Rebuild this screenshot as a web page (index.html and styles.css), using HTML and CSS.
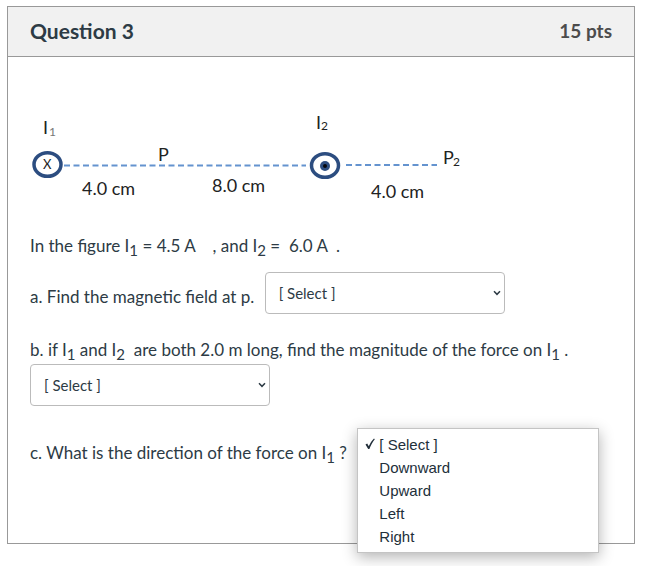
FILE: index.html
```html
<!DOCTYPE html>
<html lang="en">
<head>
<meta charset="utf-8">
<title>Question 3</title>
<link rel="stylesheet" href="styles.css">
</head>
<body>
<main class="question">
  <header class="question-header">
    <h1 class="question-name">Question 3</h1>
    <span class="question-points">15 pts</span>
  </header>
  <div class="question-body">
    <svg class="figure" width="450" height="100" viewBox="0 0 450 100" role="img" aria-label="Two parallel currents and points P and P2">
      <g class="wire">
        <path d="M34 59.500H276" />
        <path d="M316 59H407" />
      </g>
      <g class="ring">
        <ellipse cx="17.500" cy="58.500" rx="13.500" ry="11.800" />
        <ellipse cx="295" cy="59.500" rx="13.500" ry="11.800" />
      </g>
      <circle class="dot" cx="295" cy="60" r="5" />
      <circle class="dot-core" cx="295" cy="60" r="2" />
      <g class="figure-text">
        <text x="13" y="28">I</text><text class="small faint" x="19" y="30">1</text>
        <text x="286" y="23">I</text><text class="small" x="291" y="24">2</text>
        <text class="cross" x="13" y="63">X</text>
        <text x="128" y="55">P</text>
        <text x="413" y="58">P</text><text class="small" x="423" y="60">2</text>
        <text x="52" y="89">4.0 cm</text>
        <text x="182" y="86">8.0 cm</text>
        <text x="341" y="92">4.0 cm</text>
      </g>
    </svg>
    <p>In the figure I<sub>1</sub> = 4.5 A &nbsp;&nbsp; , and I<sub>2</sub> =&nbsp; 6.0 A&nbsp; .</p>
    <p class="answer"><label for="field">a. Find the magnetic field at p.</label>
      <span class="picker"><select id="field"><option>[ Select ]</option></select><svg class="chevron" width="8" height="6" viewBox="0 0 8 6" aria-hidden="true"><path d="M1 1.200L4 4.300L7 1.200" /></svg></span></p>
    <p class="answer force"><label for="force">b. if I<sub>1</sub> and I<sub>2</sub>&nbsp; are both 2.0 m long, find the magnitude of the force on I<sub>1</sub> .</label>
      <span class="picker"><select id="force"><option>[ Select ]</option></select><svg class="chevron" width="8" height="6" viewBox="0 0 8 6" aria-hidden="true"><path d="M1 1.200L4 4.300L7 1.200" /></svg></span></p>
    <p class="answer"><label for="direction">c. What is the direction of the force on I<sub>1</sub> ?</label>
      <span class="picker"><select id="direction"><option>[ Select ]</option></select><span class="menu" role="listbox" aria-label="Direction">
        <button type="button" role="option" aria-selected="true"><svg class="check" width="10" height="12" viewBox="0 0 10 12" aria-hidden="true"><path d="M0.500 6.500L2.200 5.500L3.800 8.300C5 5.500 6.800 2.500 9 0.500L9.800 1.200C7.500 4 5.600 7.500 4.400 11H3.200Z" /></svg>[ Select ]</button>
        <button type="button" role="option" aria-selected="false">Downward</button>
        <button type="button" role="option" aria-selected="false">Upward</button>
        <button type="button" role="option" aria-selected="false">Left</button>
        <button type="button" role="option" aria-selected="false">Right</button>
      </span></span></p>
  </div>
</main>
</body>
</html>
```
FILE: styles.css
```css
* { box-sizing: border-box; }

body {
  min-height: 100vh;
  margin: 0;
  padding: 6px 24px 20px 7px;
  background: #fff;
  color: #2d3b45;
  font: 17px/24px Lato, "Liberation Sans", sans-serif;
}

.question { border: 1px solid #999; }

.question-header {
  display: flex;
  justify-content: space-between;
  align-items: center;
  padding: 12px 22px 13px;
  border-bottom: 1px solid #999;
  background: #f1f1f1;
}

.question-name {
  margin: 0;
  font-size: 21px;
  line-height: 24px;
}

.question-points {
  color: #4c4c4c;
  font-size: 19px;
  font-weight: bold;
}

.question-body { padding: 49px 22px 49px; }

.figure {
  display: block;
  max-width: 100%;
}

.wire path {
  fill: none;
  stroke: #6493cf;
  stroke-width: 2;
  stroke-dasharray: 6 3.500;
}

.ring ellipse {
  fill: #fff;
  stroke: #2c4d80;
  stroke-width: 3.500;
}

.dot { fill: #2c4d80; }
.dot-core { fill: #05070c; }

.figure-text {
  fill: #222;
  font-size: 18px;
}

.figure-text .small { font-size: 12px; }
.figure-text .faint { fill: #777; }
.figure-text .cross { font-size: 13px; }

p { margin: 28px 0 14px; }
.answer { margin: 0 0 12px; }
.force { margin-bottom: 10px; }
.force .picker { margin-top: 2px; }

label { margin-right: 6px; }

sub {
  position: relative;
  bottom: -4px;
  font-size: 15px;
  line-height: 0;
  vertical-align: baseline;
}

.picker {
  display: inline-block;
  position: relative;
  width: 240px;
  margin-bottom: 12px;
  vertical-align: middle;
}

.picker select {
  display: block;
  width: 100%;
  height: 42px;
  padding: 0 13px;
  border: 1px solid #bbb;
  border-radius: 4px;
  appearance: none;
  background: #fff;
  color: inherit;
  font: 15px/20px Lato, "Liberation Sans", sans-serif;
}

.chevron {
  position: absolute;
  top: 18px;
  right: 4px;
  fill: none;
  stroke: #2d3b45;
  stroke-width: 1.500;
  pointer-events: none;
}

.menu {
  position: absolute;
  z-index: 1;
  top: 0;
  left: 0;
  width: 242px;
  padding: 4px 0;
  border: 1px solid #c4c4c4;
  background: #fff;
  box-shadow: 0 4px 14px rgba(0, 0, 0, 0.3);
}

.menu button {
  display: block;
  position: relative;
  width: 100%;
  padding: 0 21px;
  border: 0;
  background: none;
  color: #222f3a;
  font: 15px/23px "Liberation Sans", sans-serif;
  text-align: left;
}

.check {
  position: absolute;
  top: 5px;
  left: 7px;
  fill: #222f3a;
}
```
